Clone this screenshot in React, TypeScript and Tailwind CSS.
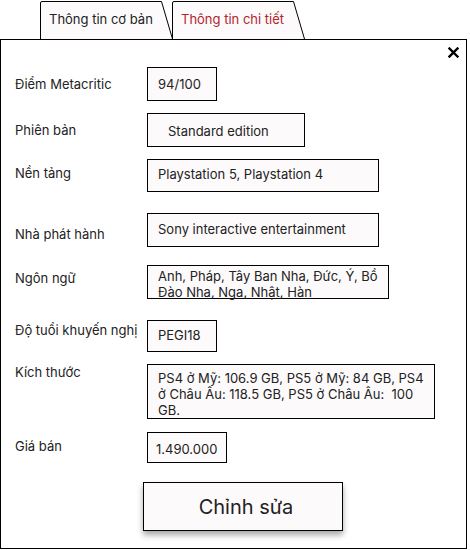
import React from "react";

function Tab({ label, active }: { label: string; active?: boolean }) {
  return (
    <div className="relative h-[39px] w-[133px] -mr-[1px]">
      <svg className="absolute inset-0" width="133" height="39" viewBox="0 0 133 39">
        <path d="M0.5 39 L0.5 3 Q0.5 1.5 2 1.5 L121.5 1.5 L132.5 39" fill="#fcfafb" stroke="#000" strokeWidth="1" />
      </svg>
      <span
        className={`relative block pl-[9px] pt-[11px] text-[13px] leading-[16px] ${active ? "text-[#b3262b]" : "text-[#222]"}`}
      >
        {label}
      </span>
    </div>
  );
}

function Row({
  mt,
  labelPt,
  label,
  boxW,
  boxH,
  pl,
  pt,
  children,
}: {
  mt: string;
  labelPt: string;
  label: string;
  boxW: string;
  boxH: string;
  pl: string;
  pt: string;
  children: React.ReactNode;
}) {
  return (
    <div className={`flex items-start ${mt}`}>
      <div className={`w-[132px] shrink-0 text-[13px] leading-[16px] text-[#222] ${labelPt}`}>{label}</div>
      <div className={`border border-black bg-[#fdfafb] text-[13px] leading-[16px] text-[#222] ${boxW} ${boxH} ${pl} ${pt}`}>
        {children}
      </div>
    </div>
  );
}

export default function App() {
  return (
    <div className="w-[470px] h-[550px] bg-white" style={{ fontFamily: "Inter, 'Noto Sans', sans-serif" }}>
      <div className="flex pl-[40px] h-[39px]">
        <Tab label="Thông tin cơ bản" />
        <Tab label="Thông tin chi tiết" active />
      </div>
      <div className="relative w-[467px] h-[510px] border border-black pl-[14px]">
        <svg className="absolute left-[447px] top-[7px]" width="11" height="11" viewBox="0 0 11 11">
          <path d="M1.5 1.5 L9.5 9.5 M9.5 1.5 L1.5 9.5" stroke="#000" strokeWidth="2.4" strokeLinecap="square" />
        </svg>

        <Row mt="mt-[27px]" labelPt="pt-[9px]" label="Điểm Metacritic" boxW="w-[70px]" boxH="h-[34px]" pl="pl-[10px]" pt="pt-[8px]">
          94/100
        </Row>
        <Row mt="mt-[12px]" labelPt="pt-[9px]" label="Phiên bản" boxW="w-[158px]" boxH="h-[34px]" pl="pl-[20px]" pt="pt-[9px]">
          Standard edition
        </Row>
        <Row mt="mt-[12px]" labelPt="pt-[6px]" label="Nền tảng" boxW="w-[232px]" boxH="h-[33px]" pl="pl-[10px]" pt="pt-[6px]">
          Playstation 5, Playstation 4
        </Row>
        <Row mt="mt-[21px]" labelPt="pt-[13px]" label="Nhà phát hành" boxW="w-[232px]" boxH="h-[34px]" pl="pl-[10px]" pt="pt-[7px]">
          Sony interactive entertainment
        </Row>
        <Row mt="mt-[18px]" labelPt="pt-[5px]" label="Ngôn ngữ" boxW="w-[242px]" boxH="h-[34px]" pl="pl-[10px]" pt="pt-[2px]">
          Anh, Pháp, Tây Ban Nha, Đức, Ý, Bồ Đào Nha, Nga, Nhật, Hàn
        </Row>
        <Row mt="mt-[21px]" labelPt="pt-[2px]" label="Độ tuổi khuyến nghị" boxW="w-[70px]" boxH="h-[32px]" pl="pl-[10px]" pt="pt-[6px]">
          PEGI18
        </Row>
        <Row mt="mt-[12px]" labelPt="pt-[0px]" label="Kích thước" boxW="w-[288px]" boxH="h-[55px]" pl="pl-[10px]" pt="pt-[5px]">
          PS4 ở Mỹ: 106.9 GB, PS5 ở Mỹ: 84 GB, PS4 ở Châu Âu: 118.5 GB, PS5 ở Châu Âu:&nbsp; 100 GB.
        </Row>
        <Row mt="mt-[13px]" labelPt="pt-[6px]" label="Giá bán" boxW="w-[80px]" boxH="h-[31px]" pl="pl-[8px]" pt="pt-[8px]">
          1.490.000
        </Row>

        <div className="mt-[19px] flex pl-[128px]">
          <button className="w-[200px] h-[49px] border border-black bg-[#fdfafb] pl-[6px] text-[20px] text-[#222] shadow-[0_4px_6px_rgba(0,0,0,0.35)]">
            Chỉnh sửa
          </button>
        </div>
      </div>
    </div>
  );
}
